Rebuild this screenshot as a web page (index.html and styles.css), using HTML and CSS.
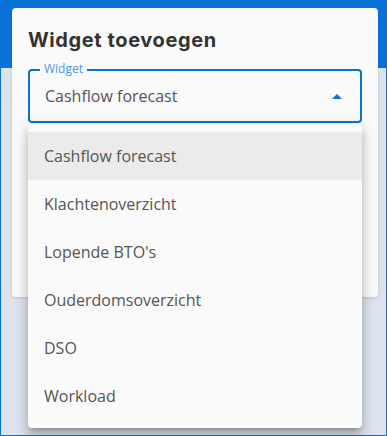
FILE: index.html
```html
<!DOCTYPE html>
<html lang="nl">
<head>
    <meta charset="UTF-8">
    <meta name="viewport" content="width=device-width, initial-scale=1.0">
    <title>Widget toevoegen</title>
    <link rel="stylesheet" href="styles.css">
</head>
<body>
    <div class="page">
        <div class="dialog">
            <h2>Widget toevoegen</h2>
            <div class="select">
                <span class="select-label">Widget</span>
                <span class="select-value">Cashflow forecast</span>
                <svg class="select-arrow" width="10" height="5" viewBox="0 0 10 5">
                    <path d="M0 5 L5 0 L10 5 Z" fill="#0a72d6"/>
                </svg>
            </div>
        </div>

        <ul class="menu">
            <li class="selected">Cashflow forecast</li>
            <li>Klachtenoverzicht</li>
            <li>Lopende BTO's</li>
            <li>Ouderdomsoverzicht</li>
            <li>DSO</li>
            <li>Workload</li>
        </ul>
    </div>
</body>
</html>
```

FILE: styles.css
```css
html, body {
    margin: 0;
    padding: 0;
}

body {
    font-family: 'Open Sans', 'Noto Sans', sans-serif;
    color: #555;
}

.page {
    position: relative;
    box-sizing: border-box;
    width: 387px;
    height: 436px;
    border: 1px solid #0a72d6;
    background: linear-gradient(#0a72d6 0, #0a72d6 67px, #dde3ec 67px);
    padding: 7px 8px 0 11px;
}

.dialog {
    background-color: #fafafa;
    border-radius: 4px;
    height: 289px;
    padding: 0 16px;
    box-shadow: 0 1px 3px rgba(0, 0, 0, 0.15);
}

h2 {
    margin: 0;
    padding-top: 19px;
    font-family: 'Inter', sans-serif;
    font-weight: 700;
    font-size: 20px;
    line-height: 26px;
    letter-spacing: 0.6px;
    color: #333;
}

.select {
    position: relative;
    margin-top: 16px;
    height: 50px;
    border: 2px solid #0a72d6;
    border-radius: 4px;
    display: flex;
    align-items: center;
    padding: 0 15px;
}

.select-label {
    position: absolute;
    top: -9px;
    left: 10px;
    padding: 0 4px;
    background-color: #fafafa;
    font-size: 12px;
    line-height: 14px;
    color: #4a96e6;
}

.select-value {
    flex: 1;
    font-size: 16px;
    color: #555;
}

.select-arrow {
    margin-right: 3px;
}

.menu {
    position: absolute;
    top: 123px;
    left: 27px;
    width: 334px;
    margin: 0;
    padding: 8px 0;
    list-style: none;
    background-color: #fafafa;
    border-radius: 4px;
    box-shadow: 0 5px 5px -3px rgba(0, 0, 0, 0.2), 0 8px 10px 1px rgba(0, 0, 0, 0.14), 0 3px 14px 2px rgba(0, 0, 0, 0.12);
}

.menu li {
    height: 48px;
    line-height: 48px;
    padding: 0 16px;
    font-size: 16px;
    color: #555;
}

.menu li.selected {
    background-color: #ebebeb;
}
```
